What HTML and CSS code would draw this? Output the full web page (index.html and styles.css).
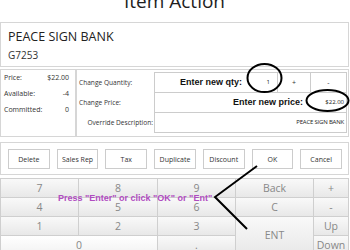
FILE: index.html
```html
<!DOCTYPE html>
<html lang="en">
<head>
    <meta charset="UTF-8">
    <meta name="viewport" content="width=device-width, initial-scale=1.0">
    <title>Item Action</title>
    <link rel="stylesheet" href="styles.css">
</head>
<body>
    <div class="item-action">
        <h1 class="page-title">Item Action</h1>

        <div class="item-card">
            <div class="item-name">PEACE SIGN BANK</div>
            <div class="item-code">G7253</div>
        </div>

        <div class="detail-row">
            <div class="stock-box">
                <div class="stock-line"><span>Price:</span><span>$22.00</span></div>
                <div class="stock-line"><span>Available:</span><span>-4</span></div>
                <div class="stock-line"><span>Committed:</span><span>0</span></div>
            </div>
            <div class="change-box">
                <div class="change-labels">
                    <div class="change-label">Change Quantity:</div>
                    <div class="change-label">Change Price:</div>
                    <div class="change-label change-label-right">Override Description:</div>
                </div>
                <div class="change-fields">
                    <div class="field-row">
                        <div class="field-prompt">Enter new qty:</div>
                        <div class="field-value qty-value">1</div>
                        <div class="step-btn">+</div>
                        <div class="step-btn step-minus">-</div>
                    </div>
                    <div class="field-row">
                        <div class="field-prompt">Enter new price:</div>
                        <div class="field-value price-value">$22.00</div>
                    </div>
                    <div class="field-row">
                        <div class="field-value desc-value">PEACE SIGN BANK</div>
                    </div>
                </div>
            </div>
        </div>

        <div class="action-bar">
            <button class="action-btn">Delete</button>
            <button class="action-btn">Sales Rep</button>
            <button class="action-btn">Tax</button>
            <button class="action-btn">Duplicate</button>
            <button class="action-btn">Discount</button>
            <button class="action-btn">OK</button>
            <button class="action-btn">Cancel</button>
        </div>

        <div class="keypad">
            <div class="key">7</div>
            <div class="key">8</div>
            <div class="key">9</div>
            <div class="key">Back</div>
            <div class="key">+</div>
            <div class="key">4</div>
            <div class="key">5</div>
            <div class="key">6</div>
            <div class="key">C</div>
            <div class="key">-</div>
            <div class="key">1</div>
            <div class="key">2</div>
            <div class="key">3</div>
            <div class="key key-ent">ENT</div>
            <div class="key">Up</div>
            <div class="key key-zero">0</div>
            <div class="key">.</div>
            <div class="key">Down</div>
        </div>
    </div>

    <!-- hand drawn notes on top of the screen -->
    <div class="note">Press "Enter" or click "OK" or "Ent"</div>
    <svg class="marks" width="350" height="250" viewBox="0 0 350 250">
        <ellipse cx="264.5" cy="78" rx="17" ry="14" fill="none" stroke="#000" stroke-width="2"/>
        <ellipse cx="327.5" cy="100.5" rx="21" ry="10.5" fill="none" stroke="#000" stroke-width="2"/>
        <polyline points="257,166 215,197 247,229" fill="none" stroke="#000" stroke-width="2"/>
    </svg>
</body>
</html>
```

FILE: styles.css
```css
body {
    margin: 0;
    background-color: #fff;
    font-family: "Open Sans", sans-serif;
    color: #222;
}
.item-action {
    width: 349px;
}
.page-title {
    margin: -9px 0 11px;
    font-size: 19px;
    font-weight: normal;
    line-height: 20px;
    text-align: center;
    color: #1e1e1e;
}
.item-card {
    border: 1px solid #d6d6d6;
    padding: 6px 7px 4px;
}
.item-name {
    font-size: 12.5px;
    line-height: 16px;
}
.item-code {
    margin-top: 3px;
    font-size: 10px;
    line-height: 14px;
    color: #333;
}
.detail-row {
    display: flex;
    margin-top: 2px;
    height: 68px;
}
.stock-box {
    box-sizing: border-box;
    width: 76px;
    border: 1px solid #d6d6d6;
    padding: 0 6px 0 3px;
}
.stock-line {
    display: flex;
    justify-content: space-between;
    font-size: 7px;
    line-height: 16px;
    color: #333;
}
.change-box {
    flex: 1;
    display: flex;
    border: 1px solid #d6d6d6;
    padding: 2px 1px 3px 2px;
}
.change-labels {
    width: 75px;
    padding-top: 1px;
}
.change-label {
    height: 20px;
    line-height: 20px;
    font-size: 6.6px;
    color: #333;
}
.change-label-right {
    text-align: right;
    padding-right: 1px;
}
.change-fields {
    flex: 1;
    border: 1px solid #ccc;
}
.field-row {
    display: flex;
    height: 19px;
    border-bottom: 1px solid #ccc;
}
.field-row:last-child {
    border-bottom: none;
}
.field-prompt {
    flex: 1;
    padding-right: 3px;
    font-family: "Liberation Sans", Arial, sans-serif;
    font-size: 9px;
    font-weight: bold;
    line-height: 19px;
    text-align: right;
    color: #111;
}
.field-value {
    font-size: 6px;
    line-height: 19px;
    text-align: right;
    color: #222;
}
.qty-value {
    width: 25px;
    padding-right: 7px;
}
.price-value {
    width: 38px;
    padding-right: 2px;
}
.desc-value {
    flex: 1;
    padding-right: 2px;
    letter-spacing: -0.2px;
}
.step-btn {
    width: 32px;
    border-left: 1px solid #ccc;
    font-size: 7px;
    line-height: 19px;
    text-align: center;
    color: #333;
}
.step-minus {
    width: 35px;
}
.action-bar {
    display: flex;
    gap: 7px;
    margin-top: 5px;
    border: 1px solid #d6d6d6;
    padding: 6px 6px 5px 7px;
}
.action-btn {
    flex: 1;
    height: 20px;
    padding: 0;
    border: 1px solid #ccc;
    background-color: #fff;
    font-family: "Open Sans", sans-serif;
    font-size: 7px;
    color: #333;
}
.keypad {
    display: grid;
    grid-template-columns: 77px 78px 77px 77px 1fr;
    grid-auto-rows: 18px;
    gap: 1px;
    margin-top: 3px;
    border: 1px solid #cfcfcf;
    background-color: #cfcfcf;
}
.key {
    background: linear-gradient(#f9f9f9, #e8e8e8);
    font-size: 10.5px;
    line-height: 18px;
    text-align: center;
    color: #888;
}
.key-ent {
    grid-row: span 2;
    line-height: 37px;
}
.key-zero {
    grid-column: span 2;
    background: linear-gradient(#fff, #f2f2f2);
}
.note {
    position: absolute;
    left: 58px;
    top: 193px;
    font-family: "Liberation Sans", Arial, sans-serif;
    font-size: 9px;
    font-weight: bold;
    line-height: 10px;
    color: #b04cc0;
    white-space: nowrap;
}
.marks {
    position: absolute;
    left: 0;
    top: 0;
    pointer-events: none;
}
```
